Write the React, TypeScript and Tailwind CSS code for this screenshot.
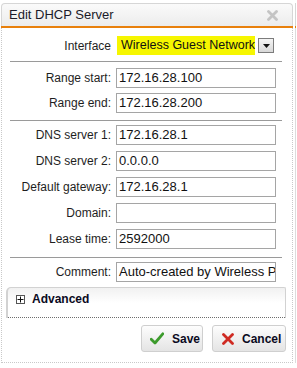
import type { ReactNode } from 'react';

function Row({ label, children }: { label: string; children: ReactNode }) {
  return (
    <div className="flex items-center h-[20px]">
      <div className="w-[109px] text-right text-[12px] text-[#1e1e1e] whitespace-nowrap">{label}</div>
      <div className="ml-[5px]">{children}</div>
    </div>
  );
}

function Field({ value }: { value: string }) {
  return (
    <div className="w-[160px] h-[20px] border border-[#a5a5a5] bg-white pl-[2px] text-[13px] leading-[18px] text-[#111] whitespace-nowrap overflow-hidden">
      {value}
    </div>
  );
}

function Sep() {
  return <div className="ml-[8px] w-[272px] h-px bg-[#9a9a9a]" />;
}

export default function App() {
  return (
    <div className="w-[297px] h-[368px] bg-white overflow-hidden flex font-['Liberation_Sans',Arial,sans-serif]">
      <div className="ml-px mt-[3px] w-[292px] h-[360px] flex flex-col">
        {/* header */}
        <div className="h-[23px] flex items-center justify-between pl-[7px] pr-[14px] rounded-t-[4px] border-t border-x border-[#d6d6d6] bg-gradient-to-b from-[#fafafa] to-[#ececec]">
          <span className="text-[13px] text-[#1a1a2a]">Edit DHCP Server</span>
          <svg width="11" height="11" viewBox="0 0 11 11" aria-hidden="true">
            <path d="M1.5 1.5 L9.5 9.5 M9.5 1.5 L1.5 9.5" stroke="#c4c4c4" strokeWidth="2.8" strokeLinecap="round" />
          </svg>
        </div>
        <div className="h-[2px] bg-[#e8800c]" />

        {/* body */}
        <div className="flex-1 flex flex-col pt-[8px] border-x border-b border-dotted border-[#c9c9c9]">
          <div className="flex items-center h-[19px]">
            <div className="w-[109px] text-right text-[12px] text-[#1e1e1e]">Interface</div>
            <div className="ml-[6px] flex items-center">
              <div className="h-[19px] w-[138px] bg-[#f6f600] pl-[4px] text-[12.5px] leading-[19px] text-[#111] whitespace-nowrap overflow-hidden">
                Wireless Guest Network
              </div>
              <div className="ml-[3px] w-[16px] h-[15px] border border-[#7c7c7c] bg-gradient-to-b from-[#f4f4f4] to-[#d8d8d8] flex items-center justify-center">
                <svg width="7" height="4" viewBox="0 0 7 4" aria-hidden="true">
                  <path d="M0 0 H7 L3.5 4 Z" fill="#111" />
                </svg>
              </div>
            </div>
          </div>

          <div className="mt-[6px]"><Sep /></div>

          <div className="mt-[6px] flex flex-col gap-[5px]">
            <Row label="Range start:"><Field value="172.16.28.100" /></Row>
            <Row label="Range end:"><Field value="172.16.28.200" /></Row>
          </div>

          <div className="mt-[7px]"><Sep /></div>

          <div className="mt-[4px] flex flex-col gap-[6px]">
            <Row label="DNS server 1:"><Field value="172.16.28.1" /></Row>
            <Row label="DNS server 2:"><Field value="0.0.0.0" /></Row>
            <Row label="Default gateway:"><Field value="172.16.28.1" /></Row>
            <Row label="Domain:"><Field value="" /></Row>
            <Row label="Lease time:"><Field value="2592000" /></Row>
          </div>

          <div className="mt-[8px]"><Sep /></div>

          <div className="mt-[4px]">
            <Row label="Comment:"><Field value="Auto-created by Wireless Profile" /></Row>
          </div>

          {/* advanced */}
          <div className="mt-[5px] ml-[4px] w-[280px] h-[31px] rounded-tl-[5px] rounded-tr-[2px] border-t border-x border-[#d2d2d2] border-l-2 bg-gradient-to-b from-[#f1f1f1] via-white to-white flex flex-col">
            <div className="flex items-center h-[22px] pl-[8px]">
              <div className="w-[9px] h-[9px] border border-[#555] bg-white flex items-center justify-center">
                <svg width="7" height="7" viewBox="0 0 7 7" aria-hidden="true">
                  <path d="M0.5 3.5 H6.5 M3.5 0.5 V6.5" stroke="#111" strokeWidth="1" />
                </svg>
              </div>
              <span className="ml-[7px] text-[12px] font-bold text-[#0a0a1e]">Advanced</span>
            </div>
            <div className="mt-auto border-b border-dotted border-[#6e6e6e]" />
          </div>

          {/* buttons */}
          <div className="mt-[7px] pr-[6px] flex justify-end gap-[9px]">
            <button
              type="button"
              className="w-[62px] h-[27px] rounded-[3px] border border-[#cfcfcf] bg-gradient-to-b from-[#fdfdfd] to-[#e4e4e4] flex items-center pl-[8px] gap-[8px] text-[12px] font-bold text-[#0a0a1e]"
            >
              <svg width="14" height="13" viewBox="0 0 14 13" aria-hidden="true">
                <path d="M1.2 7.2 L5 11 L12.8 1.8" stroke="#3c9b2c" strokeWidth="2.8" fill="none" strokeLinecap="round" strokeLinejoin="round" />
              </svg>
              Save
            </button>
            <button
              type="button"
              className="w-[74px] h-[27px] rounded-[3px] border border-[#cfcfcf] bg-gradient-to-b from-[#fdfdfd] to-[#e4e4e4] flex items-center pl-[9px] gap-[8px] text-[12px] font-bold text-[#0a0a1e]"
            >
              <svg width="12" height="12" viewBox="0 0 12 12" aria-hidden="true">
                <path d="M1.5 1.5 L10.5 10.5 M10.5 1.5 L1.5 10.5" stroke="#cf2a22" strokeWidth="2.8" strokeLinecap="round" />
              </svg>
              Cancel
            </button>
          </div>
        </div>
      </div>

      {/* edge of the window behind */}
      <div className="ml-[2px] mt-[3px] w-px h-[360px] flex flex-col">
        <div className="h-[23px] bg-[#d6d6d6]" />
        <div className="h-[2px] bg-[#e8800c]" />
        <div className="flex-1 bg-[#dcdcdc]" />
      </div>
    </div>
  );
}
